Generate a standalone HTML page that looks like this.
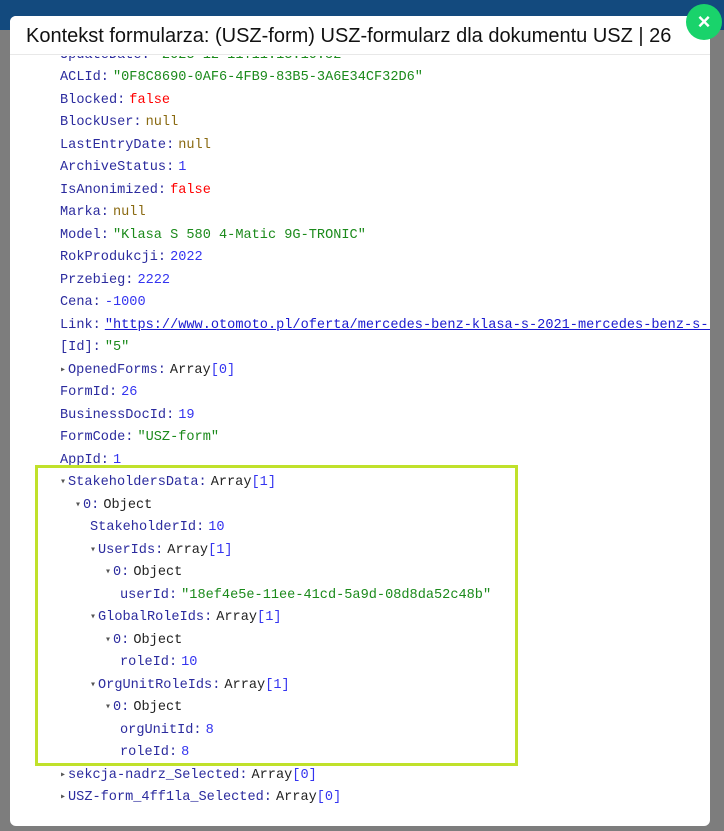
<!DOCTYPE html>
<html><head><meta charset="utf-8"><style>
body{margin:0;width:724px;height:831px;overflow:hidden;background:#7d7d7d;position:relative;font-family:"Liberation Sans",sans-serif}
.top{position:absolute;left:0;top:0;width:724px;height:30px;background:#134a7e}
.modal{position:absolute;left:10px;top:16px;width:700px;height:810px;background:#fff;border-radius:6px;overflow:hidden;z-index:1}
.hd{position:absolute;left:0;top:0;width:700px;height:39px;border-bottom:1px solid #e8e8e8;background:#fff;z-index:2;font-size:20px;color:#111;line-height:40px;padding-left:16px;box-sizing:border-box;white-space:nowrap}
.body{position:absolute;left:0;top:40px;width:700px;height:770px;overflow:hidden}
.in{position:absolute;left:0;top:-11.5px;font-family:"Liberation Mono",monospace;font-size:13.6px;white-space:nowrap}
.r{height:22.5px;line-height:22.5px;position:relative}
.k{color:#2b2b9e}.c{color:#2b2b9e;margin-right:4px}
.s{color:#1b8a1b}.n{color:#3434f0}.f{color:#f00}.nl{color:#8a6a12}.o{color:#222}
.a{color:#555;font-size:10px;display:inline-block;width:8px;vertical-align:1px}
a{color:#1a1ad0;text-decoration:underline}
.box{position:absolute;left:35px;top:465px;width:477px;height:295px;border:3px solid #c0e12a;z-index:3}
.x{position:absolute;left:686px;top:4px;width:36px;height:36px;border-radius:50%;background:#19d36b;color:#fff;font-size:22px;font-weight:bold;text-align:center;line-height:35px;z-index:5}
</style></head><body>
<div class="top"></div>
<div class="modal">
<div class="hd">Kontekst formularza: (USZ-form) USZ-formularz dla dokumentu USZ | 26</div>
<div class="body"><div class="in">
<div class="r" style="padding-left:50px"><span class="k">UpdateDate</span><span class="c">:</span><span class="s">"2023-12-11T11:13:10:52"</span></div>
<div class="r" style="padding-left:50px"><span class="k">ACLId</span><span class="c">:</span><span class="s">"0F8C8690-0AF6-4FB9-83B5-3A6E34CF32D6"</span></div>
<div class="r" style="padding-left:50px"><span class="k">Blocked</span><span class="c">:</span><span class="f">false</span></div>
<div class="r" style="padding-left:50px"><span class="k">BlockUser</span><span class="c">:</span><span class="nl">null</span></div>
<div class="r" style="padding-left:50px"><span class="k">LastEntryDate</span><span class="c">:</span><span class="nl">null</span></div>
<div class="r" style="padding-left:50px"><span class="k">ArchiveStatus</span><span class="c">:</span><span class="n">1</span></div>
<div class="r" style="padding-left:50px"><span class="k">IsAnonimized</span><span class="c">:</span><span class="f">false</span></div>
<div class="r" style="padding-left:50px"><span class="k">Marka</span><span class="c">:</span><span class="nl">null</span></div>
<div class="r" style="padding-left:50px"><span class="k">Model</span><span class="c">:</span><span class="s">"Klasa S 580 4-Matic 9G-TRONIC"</span></div>
<div class="r" style="padding-left:50px"><span class="k">RokProdukcji</span><span class="c">:</span><span class="n">2022</span></div>
<div class="r" style="padding-left:50px"><span class="k">Przebieg</span><span class="c">:</span><span class="n">2222</span></div>
<div class="r" style="padding-left:50px"><span class="k">Cena</span><span class="c">:</span><span class="n">-1000</span></div>
<div class="r" style="padding-left:50px"><span class="k">Link</span><span class="c">:</span><a>"https://www.otomoto.pl/oferta/mercedes-benz-klasa-s-2021-mercedes-benz-s-klasa"</a></div>
<div class="r" style="padding-left:50px"><span class="k">[Id]</span><span class="c">:</span><span class="s">"5"</span></div>
<div class="r" style="padding-left:50px"><span class="a">▸</span><span class="k">OpenedForms</span><span class="c">:</span><span class="o">Array</span><span class="n">[0]</span></div>
<div class="r" style="padding-left:50px"><span class="k">FormId</span><span class="c">:</span><span class="n">26</span></div>
<div class="r" style="padding-left:50px"><span class="k">BusinessDocId</span><span class="c">:</span><span class="n">19</span></div>
<div class="r" style="padding-left:50px"><span class="k">FormCode</span><span class="c">:</span><span class="s">"USZ-form"</span></div>
<div class="r" style="padding-left:50px"><span class="k">AppId</span><span class="c">:</span><span class="n">1</span></div>
<div class="r" style="padding-left:50px"><span class="a">▾</span><span class="k">StakeholdersData</span><span class="c">:</span><span class="o">Array</span><span class="n">[1]</span></div>
<div class="r" style="padding-left:65px"><span class="a">▾</span><span class="k">0</span><span class="c">:</span><span class="o">Object</span></div>
<div class="r" style="padding-left:80px"><span class="k">StakeholderId</span><span class="c">:</span><span class="n">10</span></div>
<div class="r" style="padding-left:80px"><span class="a">▾</span><span class="k">UserIds</span><span class="c">:</span><span class="o">Array</span><span class="n">[1]</span></div>
<div class="r" style="padding-left:95px"><span class="a">▾</span><span class="k">0</span><span class="c">:</span><span class="o">Object</span></div>
<div class="r" style="padding-left:110px"><span class="k">userId</span><span class="c">:</span><span class="s">"18ef4e5e-11ee-41cd-5a9d-08d8da52c48b"</span></div>
<div class="r" style="padding-left:80px"><span class="a">▾</span><span class="k">GlobalRoleIds</span><span class="c">:</span><span class="o">Array</span><span class="n">[1]</span></div>
<div class="r" style="padding-left:95px"><span class="a">▾</span><span class="k">0</span><span class="c">:</span><span class="o">Object</span></div>
<div class="r" style="padding-left:110px"><span class="k">roleId</span><span class="c">:</span><span class="n">10</span></div>
<div class="r" style="padding-left:80px"><span class="a">▾</span><span class="k">OrgUnitRoleIds</span><span class="c">:</span><span class="o">Array</span><span class="n">[1]</span></div>
<div class="r" style="padding-left:95px"><span class="a">▾</span><span class="k">0</span><span class="c">:</span><span class="o">Object</span></div>
<div class="r" style="padding-left:110px"><span class="k">orgUnitId</span><span class="c">:</span><span class="n">8</span></div>
<div class="r" style="padding-left:110px"><span class="k">roleId</span><span class="c">:</span><span class="n">8</span></div>
<div class="r" style="padding-left:50px"><span class="a">▸</span><span class="k">sekcja-nadrz_Selected</span><span class="c">:</span><span class="o">Array</span><span class="n">[0]</span></div>
<div class="r" style="padding-left:50px"><span class="a">▸</span><span class="k">USZ-form_4ff1la_Selected</span><span class="c">:</span><span class="o">Array</span><span class="n">[0]</span></div>
</div></div>
</div>
<div class="box"></div>
<div class="x">×</div>
</body></html>
